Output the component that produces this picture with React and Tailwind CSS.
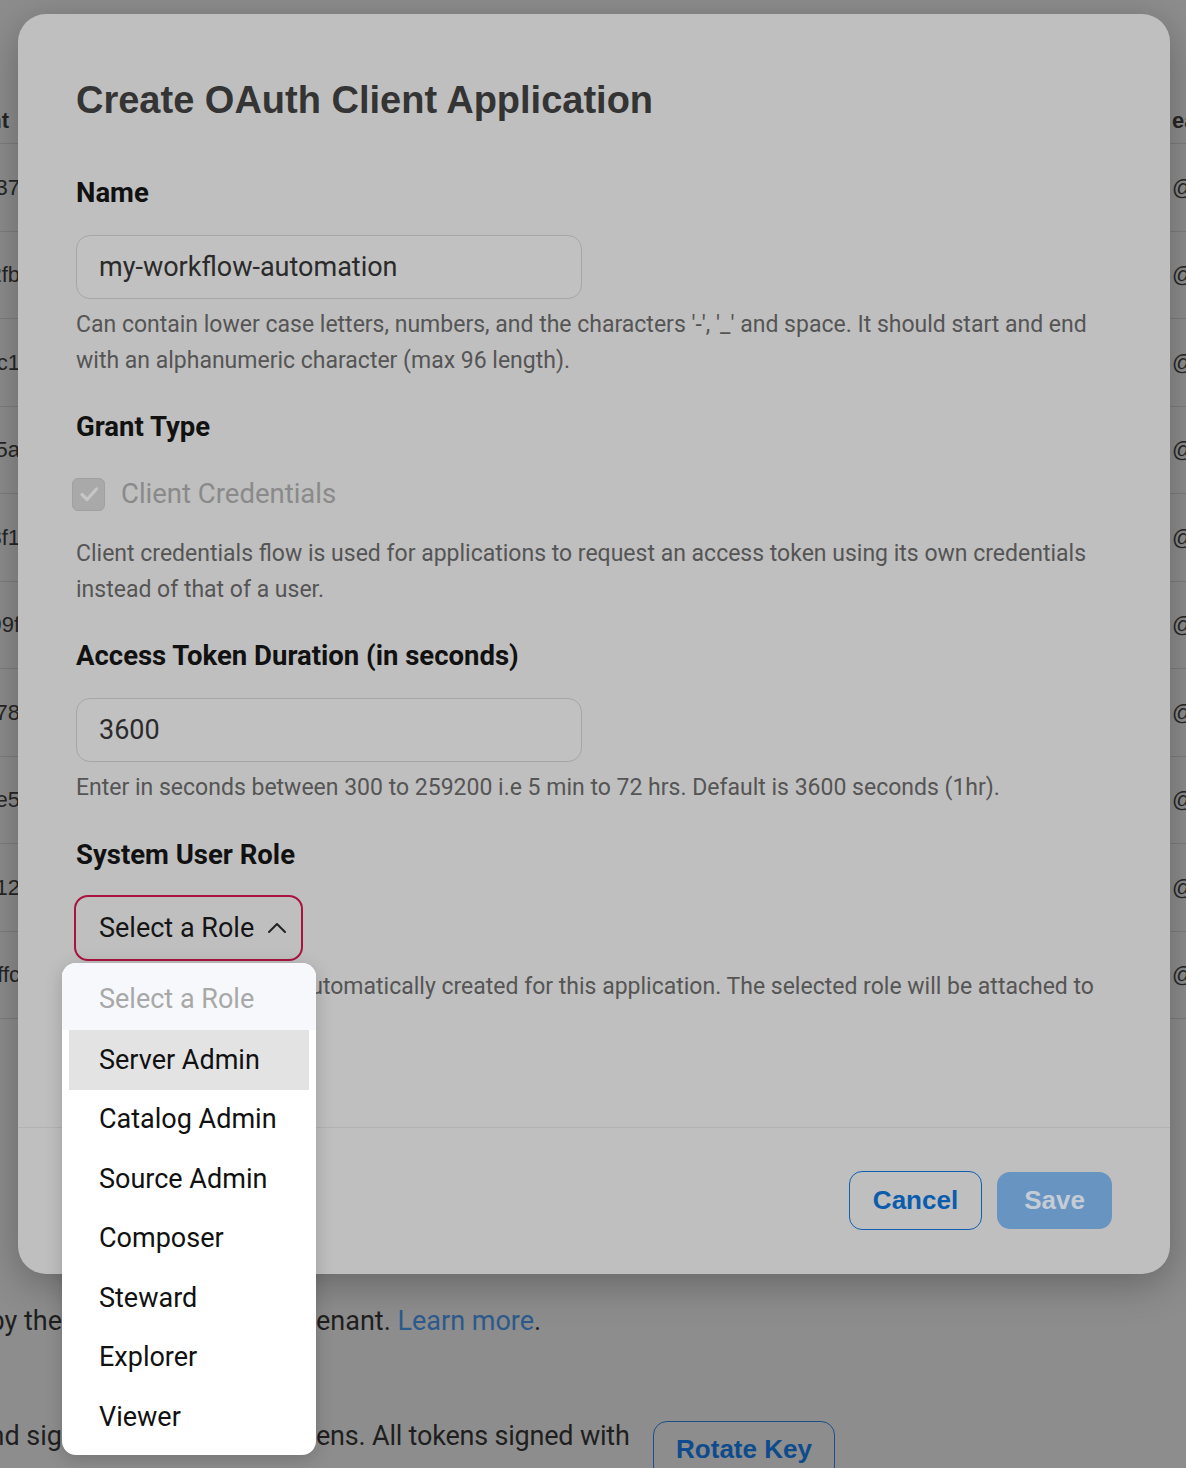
export default function App() {
  const rows = [
    ["3f9a8c37", "@acme.io"],
    ["a4e1d2fb", "@acme.io"],
    ["9b7e60c1", "@acme.io"],
    ["d2c4e15a", "@acme.io"],
    ["7e8b03f1", "@acme.io"],
    ["c1d5a99f", "@acme.io"],
    ["0f4e2b78", "@acme.io"],
    ["b8a71ce5", "@acme.io"],
    ["6d3f2a12", "@acme.io"],
    ["e7c90ffc", "@acme.io"],
  ];
  const roles = ["Server Admin", "Catalog Admin", "Source Admin", "Composer", "Steward", "Explorer", "Viewer"];
  return (
    <div className="relative w-[1186px] h-[1468px] overflow-hidden bg-[#8d8d8d] font-['Roboto',sans-serif]">
      {/* background page */}
      <div className="flex flex-col font-['Liberation_Sans',sans-serif] text-[#262626]">
        <div className="mt-[98px] h-[46px] flex items-center justify-between border-b border-[#7d7d7d] text-[22px] font-bold">
          <div className="w-[9px] flex justify-end whitespace-nowrap">Client</div>
          <div className="w-[14px] whitespace-nowrap">eated by</div>
        </div>
        {rows.map((r) => (
          <div key={r[0]} className="h-[87.5px] flex items-center justify-between border-b border-[#7d7d7d] text-[22px]">
            <div className="w-[20px] flex justify-end whitespace-nowrap">{r[0]}</div>
            <div className="w-[14px] whitespace-nowrap">{r[1]}</div>
          </div>
        ))}
        <div className="mt-[284px] flex items-center h-[36px] text-[27px] font-['Roboto',sans-serif] text-[#1f1f1f]">
          <div className="w-[62px] flex justify-end whitespace-nowrap">are issued by the</div>
          <div className="w-[254px] whitespace-nowrap overflow-hidden">system of this t</div>
          <div className="whitespace-nowrap">
            enant. <span className="text-[#2d5a8c]">Learn more</span>.
          </div>
        </div>
        <div className="mt-[76px] flex items-start h-[60px] text-[27px] font-['Roboto',sans-serif] text-[#1f1f1f]">
          <div className="w-[62px] mt-[1px] flex justify-end whitespace-nowrap">Key used and sig</div>
          <div className="w-[254px] mt-[1px] whitespace-nowrap overflow-hidden">ning access tok</div>
          <div className="w-[337px] mt-[1px] whitespace-nowrap tracking-[-0.2px]">ens. All tokens signed with</div>
          <div className="mt-[6px] w-[182px] h-[60px] rounded-[14px] border border-[#1d4f87] flex items-center justify-center pb-[4px] font-['Liberation_Sans',sans-serif] font-bold text-[26px] text-[#0d4b8d]">
            Rotate Key
          </div>
        </div>
      </div>

      {/* modal */}
      <div className="absolute left-[18px] top-[14px] w-[1152px] h-[1260px] rounded-[28px] bg-[#bfbfbf] shadow-[0_10px_40px_rgba(0,0,0,0.28)] flex flex-col">
        <div className="flex-1 px-[58px] pt-[63px] flex flex-col items-start">
          <h1 className="text-[38px] leading-[46px] font-bold text-[#343434] font-['Liberation_Sans',sans-serif]">
            Create OAuth Client Application
          </h1>

          <div className="mt-[54px] text-[27.5px] leading-[32px] font-bold text-[#111]">Name</div>
          <div className="mt-[26px] w-[506px] h-[64px] rounded-[14px] border border-[#a6a6a6] bg-[#c1c1c1] px-[22px] flex items-center text-[27px] text-[#2b2b2b]">
            my-workflow-automation
          </div>
          <p className="mt-[8px] text-[23px] leading-[36px] text-[#555]">
            Can contain lower case letters, numbers, and the characters '-', '_' and space. It should start and end with an alphanumeric character (max 96 length).
          </p>

          <div className="mt-[32px] text-[27.5px] leading-[32px] font-bold text-[#111]">Grant Type</div>
          <div className="mt-[33px] h-[36px] flex items-center gap-[16px] -ml-[4px]">
            <div className="w-[33px] h-[33px] rounded-[6px] bg-[#a9a9a9] border border-[#a0a0a0] flex items-center justify-center">
              <svg width="22" height="22" viewBox="0 0 22 22" fill="none">
                <path d="M4 11.5 L9 16.5 L18.5 6" stroke="#c6c6c6" strokeWidth="3.2" strokeLinecap="round" strokeLinejoin="round" />
              </svg>
            </div>
            <span className="text-[27.5px] text-[#8a8a8a]">Client Credentials</span>
          </div>
          <p className="mt-[24px] text-[23px] leading-[36px] text-[#555]">
            Client credentials flow is used for applications to request an access token using its own credentials instead of that of a user.
          </p>

          <div className="mt-[32px] text-[27.5px] leading-[32px] font-bold text-[#111]">Access Token Duration (in seconds)</div>
          <div className="mt-[26px] w-[506px] h-[64px] rounded-[14px] border border-[#a6a6a6] bg-[#c1c1c1] px-[22px] flex items-center text-[27px] text-[#2b2b2b]">
            3600
          </div>
          <p className="mt-[8px] text-[23px] leading-[36px] text-[#555]">
            Enter in seconds between 300 to 259200 i.e 5 min to 72 hrs. Default is 3600 seconds (1hr).
          </p>

          <div className="mt-[33px] text-[27.5px] leading-[32px] font-bold text-[#111]">System User Role</div>
          <div className="mt-[24px] -ml-[2px] w-[229px] h-[66px] rounded-[14px] border-2 border-[#a8133f] flex items-center justify-between pl-[23px] pr-[14px] text-[27px] text-[#151515]">
            <span>Select a Role</span>
            <svg width="20" height="12" viewBox="0 0 20 12" fill="none">
              <path d="M2 10 L10 2 L18 10" stroke="#222" strokeWidth="2" strokeLinecap="round" strokeLinejoin="round" />
            </svg>
          </div>
          <p className="mt-[8px] text-[23px] leading-[36px] text-[#555]">
            A system user will be automatically created for this application. The selected role will be attached to this user.
          </p>
        </div>
        <div className="h-[147px] border-t border-[#b2b2b2] flex justify-end items-start pt-[43px] pr-[58px] gap-[15px] font-['Liberation_Sans',sans-serif] font-bold text-[26px]">
          <div className="w-[133px] h-[59px] rounded-[13px] border border-[#1160b0] flex items-center justify-center text-[#0b5cad]">
            Cancel
          </div>
          <div className="mt-[1px] w-[115px] h-[57px] rounded-[13px] bg-[#6894c2] flex items-center justify-center text-[#c4ccd6]">
            Save
          </div>
        </div>
      </div>

      {/* dropdown */}
      <div className="absolute left-[62px] top-[963px] w-[254px] rounded-[14px] bg-white shadow-[0_4px_18px_rgba(0,0,0,0.18)] overflow-hidden pb-[8px] text-[27px]">
        <div className="h-[67px] bg-[#f6f8fb] flex items-center pl-[37px] pt-[6px] text-[#a8a8a8]">Select a Role</div>
        <div className="px-[7px]">
          {roles.map((r, i) => (
            <div
              key={r}
              className={i === 0 ? "h-[59.5px] flex items-center pl-[30px] text-[#111] bg-[#e3e3e3]" : "h-[59.5px] flex items-center pl-[30px] text-[#111]"}
            >
              {r}
            </div>
          ))}
        </div>
      </div>
    </div>
  );
}
